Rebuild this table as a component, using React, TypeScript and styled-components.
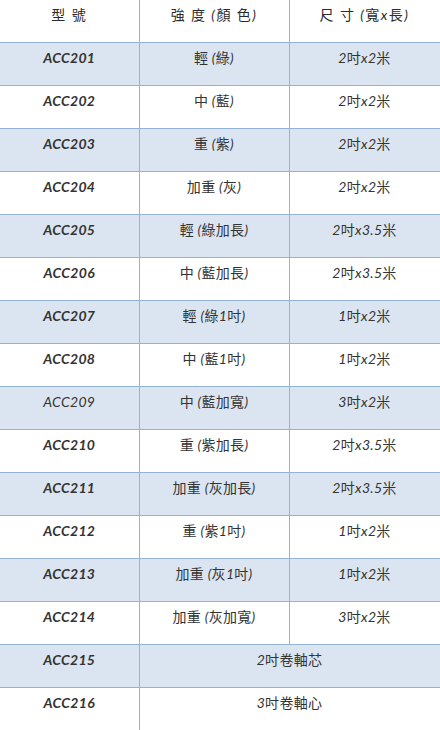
import React from "react";
import styled, { createGlobalStyle } from "styled-components";

const GlobalStyle = createGlobalStyle`
  html, body {
    margin: 0;
    padding: 0;
    background: #fff;
  }
  body {
    font-family: Lato, "Noto Sans CJK TC", sans-serif;
    color: #333;
  }
`;

const Table = styled.table`
  width: 440px;
  border-collapse: collapse;
  table-layout: fixed;
  font-size: 14px;
  line-height: 20px;
`;

const HeadCell = styled.th`
  font-weight: normal;
  font-style: italic;
  color: #2b2b2b;
  letter-spacing: 1.5px;
  text-align: center;
  vertical-align: top;
  padding: 5px 8px 17px;
  height: 20px;
  border-right: 1px solid #95b3d7;
  border-bottom: 1px solid #95b3d7;
`;

const Row = styled.tr<{ $striped?: boolean }>`
  background: ${(p) => (p.$striped ? "#dbe5f1" : "#fff")};
`;

const Cell = styled.td<{ $bold?: boolean }>`
  font-style: italic;
  font-weight: ${(p) => (p.$bold ? 700 : 400)};
  letter-spacing: 0.3px;
  text-align: center;
  vertical-align: top;
  padding: 5px 8px 17px;
  height: 20px;
  border-right: 1px solid #95b3d7;
  border-bottom: 1px solid #95b3d7;
`;

// CJK glyphs stay upright, the latin parts keep the italic face
const Upright = styled.span`
  font-style: normal;
  font-family: "Noto Sans CJK TC", sans-serif;
  line-height: 14px;
`;

function Mixed({ text }: { text: string }) {
  const parts = text.match(/[\u3400-\u9fff]+|[^\u3400-\u9fff]+/g) || [];
  return (
    <>
      {parts.map((part, i) =>
        /[\u3400-\u9fff]/.test(part) ? (
          <Upright key={i}>{part}</Upright>
        ) : (
          <React.Fragment key={i}>{part}</React.Fragment>
        )
      )}
    </>
  );
}

type Item = { code: string; grade?: string; size?: string; span?: string; light?: boolean };

const items: Item[] = [
  { code: "ACC201", grade: "輕 (綠)", size: "2吋x2米" },
  { code: "ACC202", grade: "中 (藍)", size: "2吋x2米" },
  { code: "ACC203", grade: "重 (紫)", size: "2吋x2米" },
  { code: "ACC204", grade: "加重 (灰)", size: "2吋x2米" },
  { code: "ACC205", grade: "輕 (綠加長)", size: "2吋x3.5米" },
  { code: "ACC206", grade: "中 (藍加長)", size: "2吋x3.5米" },
  { code: "ACC207", grade: "輕 (綠1吋)", size: "1吋x2米" },
  { code: "ACC208", grade: "中 (藍1吋)", size: "1吋x2米" },
  { code: "ACC209", grade: "中 (藍加寬)", size: "3吋x2米", light: true },
  { code: "ACC210", grade: "重 (紫加長)", size: "2吋x3.5米" },
  { code: "ACC211", grade: "加重 (灰加長)", size: "2吋x3.5米" },
  { code: "ACC212", grade: "重 (紫1吋)", size: "1吋x2米" },
  { code: "ACC213", grade: "加重 (灰1吋)", size: "1吋x2米" },
  { code: "ACC214", grade: "加重 (灰加寬)", size: "3吋x2米" },
  { code: "ACC215", span: "2吋卷軸芯" },
  { code: "ACC216", span: "3吋卷軸心" },
];

export default function App() {
  return (
    <>
      <GlobalStyle />
      <Table>
        <colgroup>
          <col style={{ width: 139 }} />
          <col style={{ width: 150 }} />
          <col style={{ width: 151 }} />
        </colgroup>
        <thead>
          <tr>
            <HeadCell>
              <Mixed text="型 號" />
            </HeadCell>
            <HeadCell>
              <Mixed text="強 度 (顏 色)" />
            </HeadCell>
            <HeadCell>
              <Mixed text="尺 寸 (寬x長)" />
            </HeadCell>
          </tr>
        </thead>
        <tbody>
          {items.map((item, i) => (
            <Row key={item.code} $striped={i % 2 === 0}>
              <Cell $bold={!item.light}>{item.code}</Cell>
              {item.span ? (
                <Cell colSpan={2}>
                  <Mixed text={item.span} />
                </Cell>
              ) : (
                <>
                  <Cell>
                    <Mixed text={item.grade!} />
                  </Cell>
                  <Cell>
                    <Mixed text={item.size!} />
                  </Cell>
                </>
              )}
            </Row>
          ))}
        </tbody>
      </Table>
    </>
  );
}
